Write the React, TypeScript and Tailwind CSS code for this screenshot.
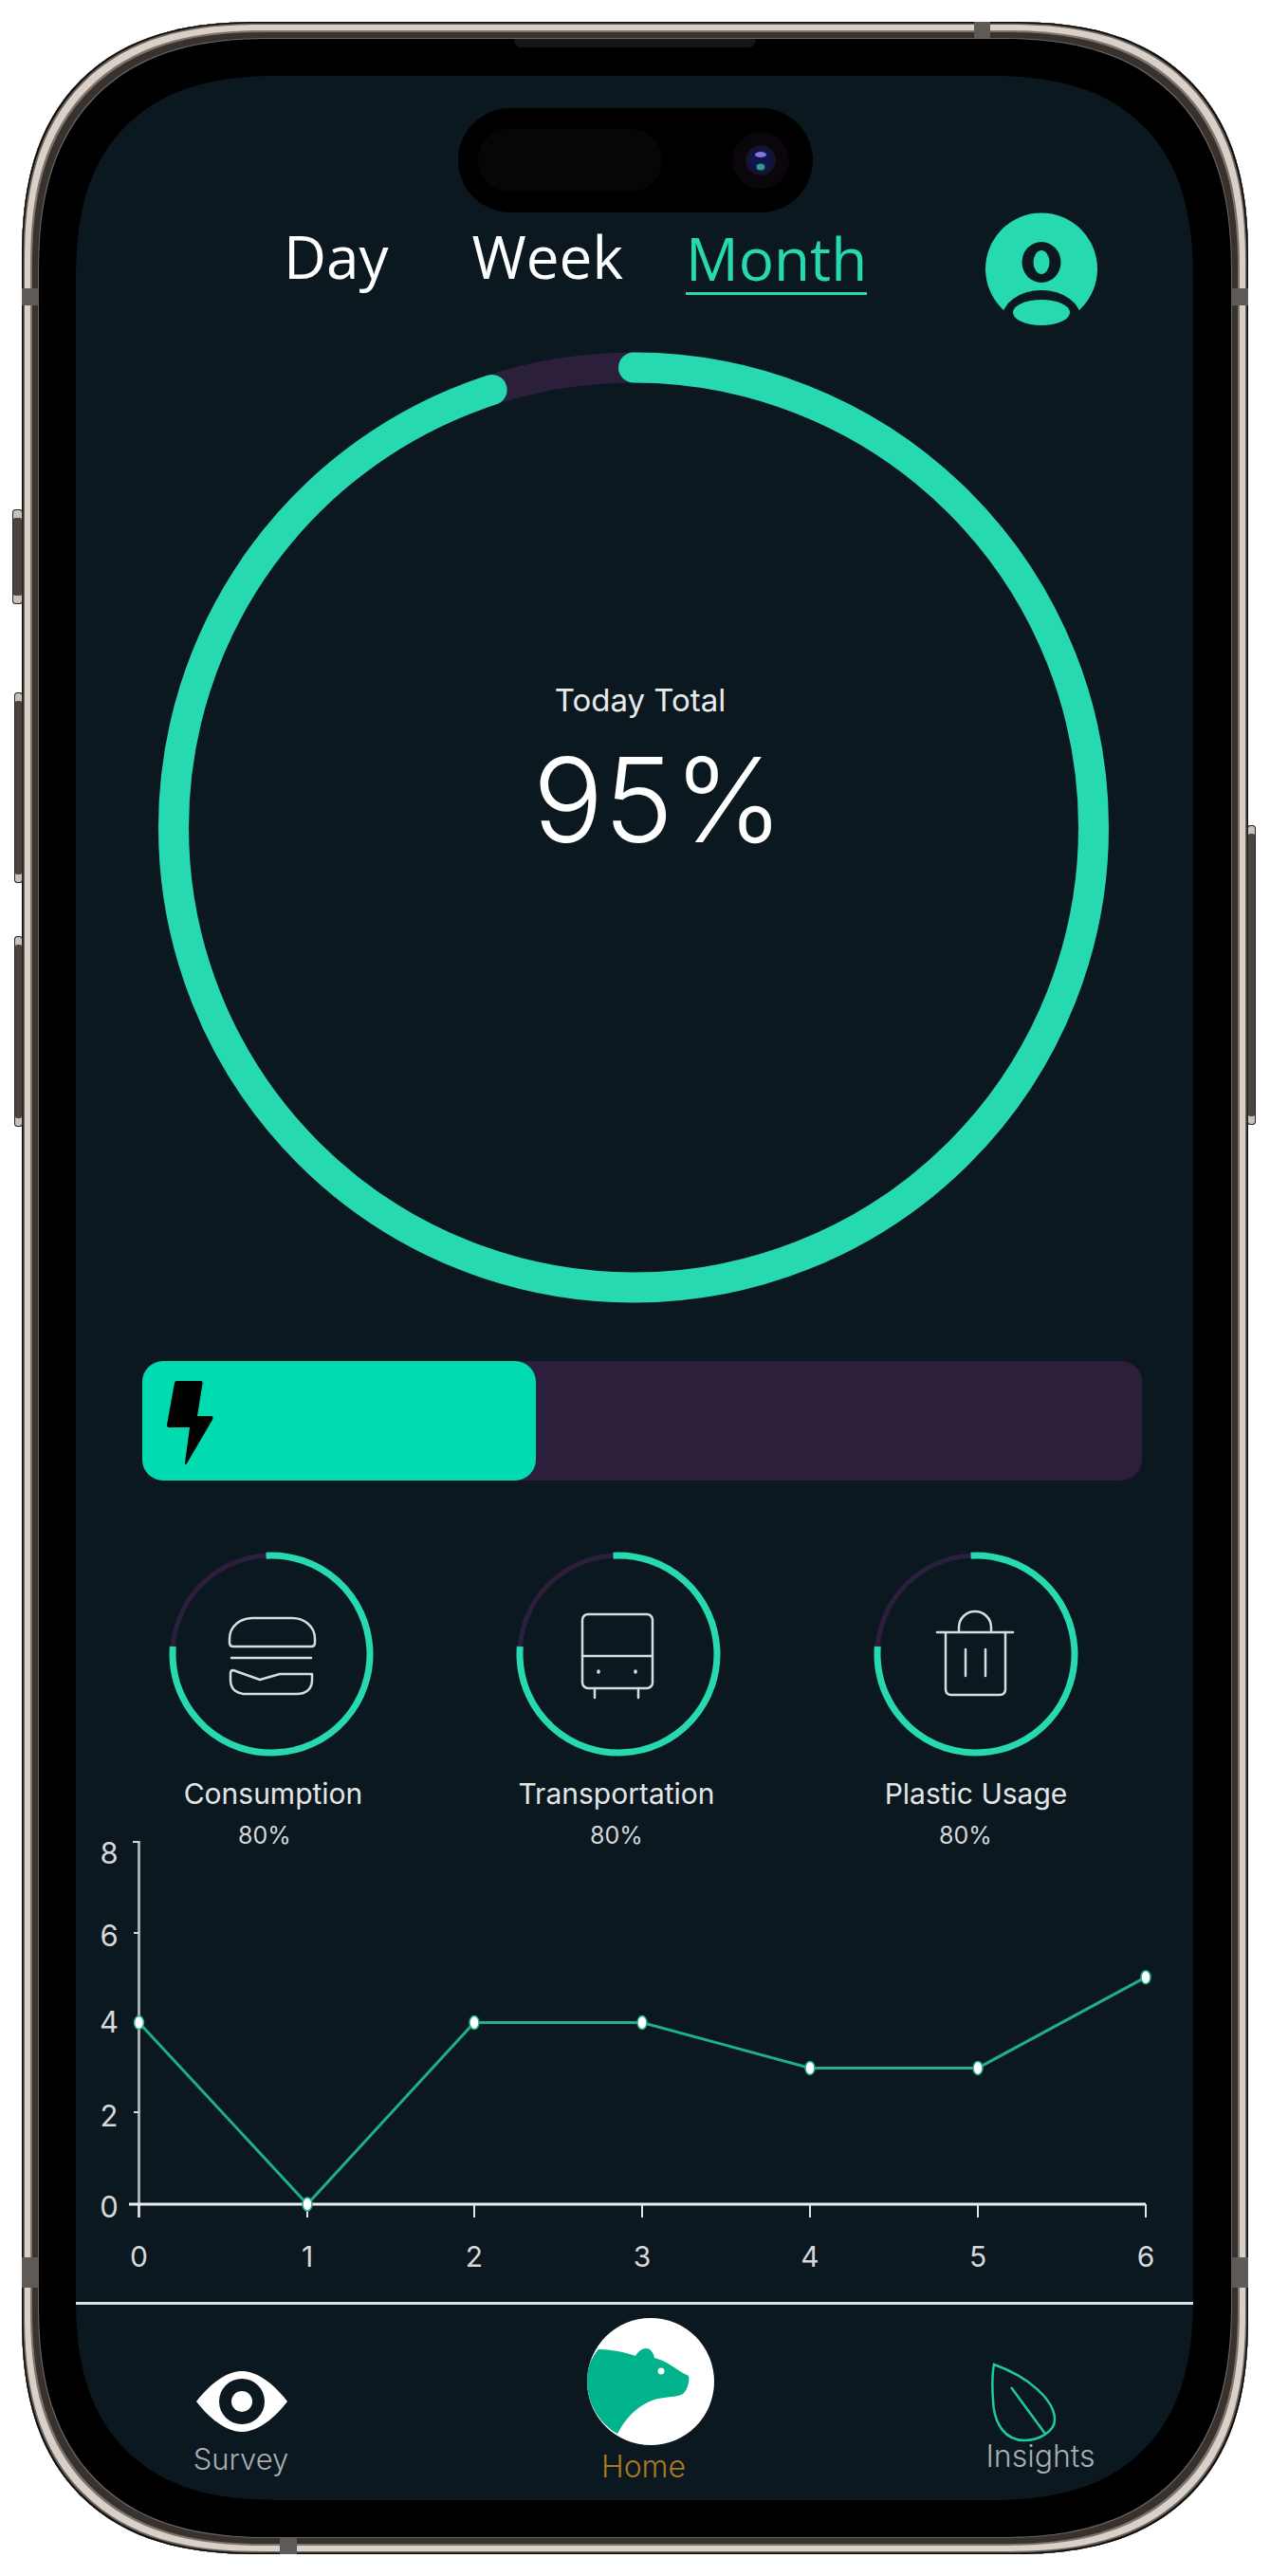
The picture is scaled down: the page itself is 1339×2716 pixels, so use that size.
const ringGreen = "#27d9b1";
const purple = "#2b1f3c";
const bg = "#0b1820";

function SideButton({ className }: { className: string }) {
  return (
    <div className={`absolute rounded-[3px] border border-[#222] bg-[#4a4440] shadow-[inset_0_8px_0_#c9c0b8,inset_0_-8px_0_#c9c0b8] ${className}`} />
  );
}

function Antenna({ className }: { className: string }) {
  return <div className={`absolute bg-[#5e5a57] ${className}`} />;
}

function CategoryRing({ children }: { children: React.ReactNode }) {
  const c = 2 * Math.PI * 104;
  return (
    <svg width="216" height="216" viewBox="0 0 216 216" fill="none">
      <circle cx="108" cy="108" r="104" stroke={purple} strokeWidth="5" />
      <circle
        cx="108"
        cy="108"
        r="104"
        stroke={ringGreen}
        strokeWidth="7"
        strokeDasharray={`${c * 0.77} ${c}`}
        transform="rotate(-93 108 108)"
      />
      <g stroke="#d9dcdd" strokeWidth="2.5" strokeLinejoin="round" strokeLinecap="round">
        {children}
      </g>
    </svg>
  );
}

function Category({
  name,
  className,
  nameClass,
  pctClass,
  children,
}: {
  name: string;
  className: string;
  nameClass: string;
  pctClass: string;
  children: React.ReactNode;
}) {
  return (
    <div className={`flex w-[320px] flex-col items-center ${className}`}>
      <CategoryRing>{children}</CategoryRing>
      <div className={`mt-[21px] text-[30px] leading-[36px] text-[#e3e6e7] ${nameClass}`}>{name}</div>
      <div className={`mt-[11px] text-[25px] leading-[30px] text-[#d5d9da] ${pctClass}`}>80%</div>
    </div>
  );
}

function Chart() {
  const xs = [146.5, 324, 500, 677, 854, 1031, 1208];
  const ys = [4, 0, 4, 4, 3, 3, 5];
  const yPos = (v: number) => 2323 - v * 47.87;
  const points = xs.map((x, i) => `${x},${yPos(ys[i])}`).join(" ");
  const yLabels: [string, number][] = [
    ["8", 1953],
    ["6", 2040],
    ["4", 2131],
    ["2", 2230],
    ["0", 2326],
  ];
  return (
    <svg width="1178" height="486" viewBox="80 1940 1178 486" className="overflow-visible">
      <line x1="146.5" y1="1940" x2="146.5" y2="2337" stroke="#a9aeb0" strokeWidth="3" />
      <line x1="140" y1="1941" x2="146.5" y2="1941" stroke="#d5d9da" strokeWidth="2" />
      <line x1="141" y1="2037" x2="146.5" y2="2037" stroke="#d5d9da" strokeWidth="2" />
      <line x1="141" y1="2131" x2="146.5" y2="2131" stroke="#d5d9da" strokeWidth="2" />
      <line x1="141" y1="2226" x2="146.5" y2="2226" stroke="#d5d9da" strokeWidth="2" />
      <line x1="136" y1="2323" x2="1208" y2="2323" stroke="#eef1f1" strokeWidth="3" />
      {xs.map((x) => (
        <line key={x} x1={x} y1="2323" x2={x} y2="2337" stroke="#e3e6e7" strokeWidth="2" />
      ))}
      <polyline points={points} fill="none" stroke="#1fae90" strokeWidth="3" />
      {xs.map((x, i) => (
        <ellipse key={x} cx={x} cy={yPos(ys[i])} rx="5" ry="7" fill="#ffffff" stroke="#1fae90" strokeWidth="1.5" />
      ))}
      {yLabels.map(([t, y]) => (
        <text key={t} x="115" y={y + 11} textAnchor="middle" fontSize="31" fill="#d5d9da" fontFamily="Inter">
          {t}
        </text>
      ))}
      {xs.map((x, i) => (
        <text key={x} x={x} y="2389" textAnchor="middle" fontSize="30" fill="#d5d9da" fontFamily="Inter">
          {i}
        </text>
      ))}
    </svg>
  );
}

export default function App() {
  const mainC = 2 * Math.PI * 485;
  return (
    <div className="h-[2716px] w-[1339px] bg-white pl-[23px] pt-[23px] font-['Inter',sans-serif]">
      <div className="relative h-[2670px] w-[1293px] rounded-[252px] bg-black p-[57px] shadow-[inset_0_0_0_1.5px_#0c0c0c,inset_0_0_0_3px_#6b635d,inset_0_0_0_9px_#d9d0c8,inset_0_0_0_11px_#7d746d,inset_0_0_0_17px_#37322e,inset_0_0_0_18px_#6a6560,inset_0_0_0_20px_#000] [corner-shape:superellipse(1.3)]">
        <SideButton className="-left-[10px] top-[514px] h-[100px] w-[11px]" />
        <SideButton className="-left-[8px] top-[707px] h-[201px] w-[9px]" />
        <SideButton className="-left-[8px] top-[964px] h-[201px] w-[9px]" />
        <SideButton className="-right-[8px] top-[847px] h-[316px] w-[9px]" />
        <Antenna className="left-[1004px] top-0 h-[17px] w-[17px]" />
        <Antenna className="bottom-0 left-[272px] h-[17px] w-[18px]" />
        <Antenna className="left-0 top-[281px] h-[18px] w-[18px]" />
        <Antenna className="right-0 top-[281px] h-[18px] w-[18px]" />
        <Antenna className="left-0 top-[2357px] h-[32px] w-[18px]" />
        <Antenna className="right-0 top-[2357px] h-[32px] w-[18px]" />
        <div className="absolute left-[519px] top-[18px] h-[9px] w-[255px] rounded-b-[8px] bg-[#161616]" />

        <div className="flex h-[2556px] w-[1178px] flex-col overflow-hidden rounded-[215px] bg-[#0b1820] [corner-shape:superellipse(1.3)]">
          {/* dynamic island */}
          <div className="ml-[403px] mt-[34px] flex h-[110px] w-[374px] shrink-0 items-center rounded-[55px] bg-black pl-[21px]">
            <div className="h-[66px] w-[194px] rounded-[33px] bg-[#060606]" />
            <svg width="60" height="60" viewBox="0 0 60 60" className="ml-[74px]">
              <circle cx="30" cy="30" r="30" fill="#0a060c" />
              <circle cx="30" cy="30" r="16" fill="#14142a" />
              <circle cx="30" cy="30" r="12" fill="#12124e" />
              <ellipse cx="30" cy="24" rx="6" ry="3" fill="#7d78d8" />
              <ellipse cx="30" cy="37" rx="4.5" ry="3.5" fill="#2e9a8a" />
            </svg>
          </div>

          {/* tabs and avatar */}
          <div className="flex h-[118px] shrink-0 items-start pl-[219px] font-['Open_Sans',sans-serif] text-[62px] leading-[80px] text-white">
            <span className="mt-[6px]">Day</span>
            <span className="ml-[88px] mt-[6px]">Week</span>
            <span className="ml-[66px] mt-[12px] border-b-[3px] border-[#27d9b1] leading-[72px] text-[#27d9b1]">Month</span>
            <svg width="118" height="119" viewBox="0 0 118 119" className="ml-[125px] overflow-visible">
              <circle cx="59" cy="59.500" r="59" fill={ringGreen} />
              <ellipse cx="59" cy="52.500" rx="20.500" ry="21.500" fill={bg} />
              <ellipse cx="59" cy="52.500" rx="8.500" ry="12.500" fill={ringGreen} />
              <ellipse cx="59" cy="113" rx="42" ry="31" fill={bg} />
              <ellipse cx="59" cy="105.500" rx="30" ry="13.500" fill={ringGreen} />
            </svg>
          </div>

          {/* main ring */}
          <div className="ml-[86px] mt-[29px] grid h-[1003px] w-[1004px] shrink-0">
            <svg width="1004" height="1003" viewBox="0 0 1004 1003" fill="none" className="[grid-area:1/1]">
              <circle cx="502" cy="501.5" r="485" stroke={purple} strokeWidth="32" />
              <circle
                cx="502"
                cy="501.5"
                r="485"
                stroke={ringGreen}
                strokeWidth="32"
                strokeLinecap="round"
                strokeDasharray={`${mainC * 0.95} ${mainC}`}
                transform="rotate(-90 502 501.5)"
              />
            </svg>
            <div className="flex flex-col items-center pl-[14px] pt-[347px] [grid-area:1/1]">
              <div className="text-[33px] leading-[40px] text-[#e8ebec]">Today Total</div>
              <div className="ml-[38px] mt-[10px] text-[124px] font-light leading-[150px] text-white">95%</div>
            </div>
          </div>

          {/* energy bar */}
          <div className="ml-[70px] mt-[61px] h-[126px] w-[1054px] shrink-0 rounded-[22px] bg-[#2b1f3c]">
            <div className="flex h-full w-[415px] items-center rounded-[22px] bg-[#00dcb0] pl-[26px]">
              <svg width="49" height="90" viewBox="0 0 49 90" className="mt-[3px]">
                <path d="M10 1 H36 Q38 1 37.500 4 L32 38 H47 Q49 38 48.500 41 L21 88 Q19 91 19 87 L24 50 H2 Q0 50 0 47 L8 3 Q8.500 1 10 1 Z" fill="#000000" />
              </svg>
            </div>
          </div>

          {/* categories */}
          <div className="ml-[46px] mt-[75px] flex h-[305px] shrink-0 items-start">
            <Category name="Consumption" className="" nameClass="pl-[4px]" pctClass="pr-[14px]">
              <path d="M66 100 H148 Q152 100 152 96 V92 C152 78 140 70 128 70 H86 C74 70 62 78 62 92 V96 Q62 100 66 100 Z" transform="translate(2 0)" />
              <path d="M66 112 H150" />
              <path d="M67 125 L95 135 L116 129 H150 V136 C150 146 142 150 134 150 H80 C72 150 64 146 64 136 V128 Q64 125 67 125 Z" transform="translate(1 0)" />
            </Category>
            <Category name="Transportation" className="ml-[46px]" nameClass="pr-[4px]" pctClass="pr-[4px]">
              <rect x="70" y="66" width="74" height="78" rx="6" />
              <path d="M70 110 H144" />
              <path d="M83 144 V154 M129 144 V154" />
              <path d="M87 126 V127 M126 126 V127" strokeWidth="3.500" />
            </Category>
            <Category name="Plastic Usage" className="ml-[57px]" nameClass="" pctClass="pr-[22px]">
              <path d="M67 85 H147" />
              <path d="M90 85 V80 C90 70 98 63 107 63 C116 63 124 70 124 80 V85" />
              <path d="M76 85 V145 Q76 151 82 151 H133 Q139 151 139 145 V85" />
              <path d="M97 103 V131 M118 103 V131" />
            </Category>
          </div>

          <Chart />

          <div className="h-[3px] w-full shrink-0 bg-[#dbe2e5]" />

          {/* bottom nav */}
          <div className="flex flex-1 items-start">
            <div className="ml-[75px] flex w-[200px] flex-col items-center pt-[70px]">
              <svg width="96" height="64" viewBox="0 0 96 64">
                <path d="M0 32 C20 6 38 0 48 0 C58 0 76 6 96 32 C76 58 58 64 48 64 C38 64 20 58 0 32 Z" fill="#ffffff" />
                <circle cx="48" cy="32" r="24" fill={bg} />
                <circle cx="48" cy="32" r="11" fill="#ffffff" />
              </svg>
              <div className="mt-[10px] pr-[2px] text-[31px] font-light leading-[38px] text-[#a9aeb1]">Survey</div>
            </div>
            <div className="ml-[231px] flex w-[200px] flex-col items-center pt-[13px]">
              <svg width="134" height="136" viewBox="0 0 134 136">
                <circle cx="67" cy="68" r="67" fill="#ffffff" />
                <path
                  d="M12 34 C25 34 40 37 51 41 C54 36 58 33 62 33 C67 33 70 38 71 43 C78 45 84 48 87 50 C94 54 100 59 107 62 C108 66 107 70 106 73 C104 78 102 81 99 82 C90 85 80 84 71 87 C62 90 54 95 47 102 C41 108 36 115 32 123 C14 113 0 92 0 67 C0 54 4 43 12 34 Z"
                  fill="#00b38d"
                />
                <circle cx="78" cy="57" r="3.500" fill="#ffffff" />
              </svg>
              <div className="mt-[3px] pr-[15px] text-[32px] font-light leading-[38px] text-[#a87a22]">Home</div>
            </div>
            <div className="ml-[211px] flex w-[200px] flex-col items-center pt-[58px]">
              <svg width="80" height="90" viewBox="1040 2482 80 90" fill="none" className="mr-[34px]" stroke="#1fc9a5" strokeWidth="2.500">
                <path d="M1048 2487 C1085 2500 1112 2525 1112 2545 C1112 2558 1095 2567 1080 2567 C1060 2567 1048 2550 1047 2525 C1046 2510 1046 2497 1048 2487 Z" />
                <path d="M1066 2511 L1102 2560" />
              </svg>
              <div className="-mt-[7px] text-[32px] font-light leading-[38px] text-[#a9aeb1]">Insights</div>
            </div>
          </div>
        </div>
      </div>
    </div>
  );
}
